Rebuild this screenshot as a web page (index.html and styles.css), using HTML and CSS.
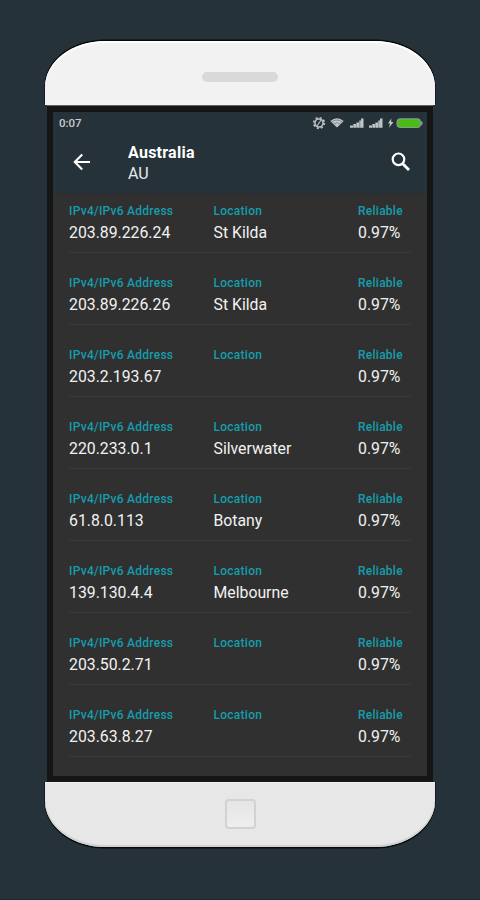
FILE: index.html
```
<!DOCTYPE html>
<html lang="en">
<head>
<meta charset="utf-8">
<title>Australia</title>
<link rel="stylesheet" href="styles.css">
</head>
<body>
<main class="phone">
  <div class="cap cap-top"><span class="speaker"></span></div>
  <div class="frame">
    <div class="screen">
      <header class="header">
        <div class="status">
          <span class="clock">0:07</span>
          <svg class="status-icons" width="112" height="14" viewBox="0 0 112 14">
            <g fill="none" stroke="#b9bec2">
              <circle cx="7" cy="7" r="4" stroke-width="1.6"/>
              <circle cx="7" cy="7" r="5.3" stroke-width="1.7" stroke-dasharray="2.1 2.06"/>
              <path d="M4.500 10.500l5-7" stroke-width="1.2"/>
            </g>
            <path d="M18.300 5Q25 -.6 31.700 5L25 11.500z" fill="#c1c5c8"/>
            <path d="M19.500 6Q25 2 30.500 6M21.500 8Q25 5.500 28.500 8" fill="none" stroke="#68737a" stroke-width=".7"/>
            <g fill="#bfc3c6">
              <path d="M38 9.500h3v2.300h-3zM41.300 8h2.700v3.800h-2.700zM44.300 6.500H47v5.300h-2.700zM47.300 4.500h1.600v7.300h-1.600zM49 2.500h2.500v9.300H49z"/>
              <path d="M57 9.500h3v2.300h-3zM60.300 8h2.700v3.800h-2.700zM63.300 6.500H66v5.300h-2.700zM66.300 4.500h1.600v7.300h-1.600zM68 2.500h2.500v9.300H68z"/>
              <path d="M79.300 2.500l-3.300 5h2l-1 4.300 4.500-5.800h-2.300z"/>
            </g>
            <rect x="84.500" y="2.200" width="24.500" height="9.800" rx="4" fill="#8c9895"/>
            <rect x="109" y="5.200" width="1.500" height="4" rx=".7" fill="#8c9895"/>
            <rect x="85.800" y="3.400" width="22" height="7.500" rx="3" fill="#46bd11"/>
          </svg>
        </div>
        <div class="toolbar">
          <svg class="back" width="18" height="18" viewBox="0 0 18 18"><path d="M17 9H2M9.200 1.600L1.800 9l7.400 7.400" fill="none" stroke="#fff" stroke-width="2.100"/></svg>
          <div class="titles"><h1>Australia</h1><p>AU</p></div>
          <svg class="search" width="20" height="20" viewBox="0 0 20 20"><circle cx="7.500" cy="7.300" r="5.800" fill="none" stroke="#fff" stroke-width="2.200"/><path d="M11.500 11.500l6.500 6.500" stroke="#fff" stroke-width="2.900"/></svg>
        </div>
      </header>
      <section class="list">
        <div class="row"><div><small>IPv4/IPv6 Address</small><b>203.89.226.24</b></div><div><small>Location</small><b>St Kilda</b></div><div><small>Reliable</small><b>0.97%</b></div></div>
        <div class="row"><div><small>IPv4/IPv6 Address</small><b>203.89.226.26</b></div><div><small>Location</small><b>St Kilda</b></div><div><small>Reliable</small><b>0.97%</b></div></div>
        <div class="row"><div><small>IPv4/IPv6 Address</small><b>203.2.193.67</b></div><div><small>Location</small></div><div><small>Reliable</small><b>0.97%</b></div></div>
        <div class="row"><div><small>IPv4/IPv6 Address</small><b>220.233.0.1</b></div><div><small>Location</small><b>Silverwater</b></div><div><small>Reliable</small><b>0.97%</b></div></div>
        <div class="row"><div><small>IPv4/IPv6 Address</small><b>61.8.0.113</b></div><div><small>Location</small><b>Botany</b></div><div><small>Reliable</small><b>0.97%</b></div></div>
        <div class="row"><div><small>IPv4/IPv6 Address</small><b>139.130.4.4</b></div><div><small>Location</small><b>Melbourne</b></div><div><small>Reliable</small><b>0.97%</b></div></div>
        <div class="row"><div><small>IPv4/IPv6 Address</small><b>203.50.2.71</b></div><div><small>Location</small></div><div><small>Reliable</small><b>0.97%</b></div></div>
        <div class="row"><div><small>IPv4/IPv6 Address</small><b>203.63.8.27</b></div><div><small>Location</small></div><div><small>Reliable</small><b>0.97%</b></div></div>
      </section>
    </div>
  </div>
  <div class="cap cap-bottom"><span class="home"></span></div>
</main>
</body>
</html>
```
FILE: styles.css
```
* { box-sizing: border-box; }
body {
  margin: 0;
  height: 900px;
  padding: 41px 45px 0 44px;
  background: #263239;
  border-bottom: 1px solid #1b2430;
  font-family: Roboto, sans-serif;
  overflow: hidden;
}
.phone { display: flex; flex-direction: column; }
.cap { display: flex; justify-content: center; align-items: center; }
.cap-top {
  height: 64px;
  margin-left: 1px;
  background: #f2f2f2;
  border-radius: 60px 60px 0 0 / 46px 46px 0 0;
  box-shadow: 0 -1px 0 .5px #05090b, inset 0 2px 1px #fff;
  padding-top: 8px;
}
.speaker { width: 76px; height: 10px; border-radius: 5px; background: #d9d9d9; }
.frame {
  height: 677px;
  margin: 0 2px 0 3px;
  padding: 6px;
  background: #141616;
  border-top: 1px solid #606363;
}
.screen { height: 664px; background: #303030; overflow: hidden; }
.header { height: 81px; background: #263239; box-shadow: 0 1px 2px #292d2f; }
.status { height: 23px; display: flex; justify-content: space-between; padding: 4px 3px 0 6px; }
.clock { font-size: 11.5px; line-height: 15px; font-weight: 500; color: #c8ccce; }
.toolbar { height: 58px; display: flex; padding-left: 20px; }
.back { margin-top: 18px; }
.titles { margin-left: 37px; padding-top: 8px; color: #fff; flex: 1; }
h1 { margin: 0; font-size: 16px; line-height: 20px; font-weight: 700; letter-spacing: .25px; }
p { margin: 1px 0 0; font-size: 16px; line-height: 20px; color: #e8eaeb; }
.search { margin: 17px 16px 0 0; }
.list { padding: 0 16px; }
.row {
  height: 72px;
  display: grid;
  grid-template-columns: 144.500px 144.500px 1fr;
  padding-top: 23px;
  border-bottom: 1px solid #3b3b3b;
}
.row:first-child { height: 60px; padding-top: 11px; }
small { display: block; font-size: 12px; line-height: 14px; color: #159dad; font-weight: 500; letter-spacing: .26px; white-space: nowrap; }
b { display: block; margin-top: 5px; font-size: 15.8px; line-height: 20px; font-weight: 400; color: #f2f2f2; white-space: nowrap; }
.cap-bottom {
  height: 65px;
  margin-left: 1px;
  background: #e7e7e7;
  border-radius: 0 0 60px 60px / 0 0 46px 46px;
  box-shadow: 0 1px 0 .5px #05090b, inset 0 -2px 1px #cdd1d1, inset 0 1px #f1f1f1;
  padding-bottom: 2px;
}
.home { width: 31px; height: 30px; border: 2px solid #d2d2d2; border-radius: 4px; background: linear-gradient(#e5e5e5, #eee); }
```
